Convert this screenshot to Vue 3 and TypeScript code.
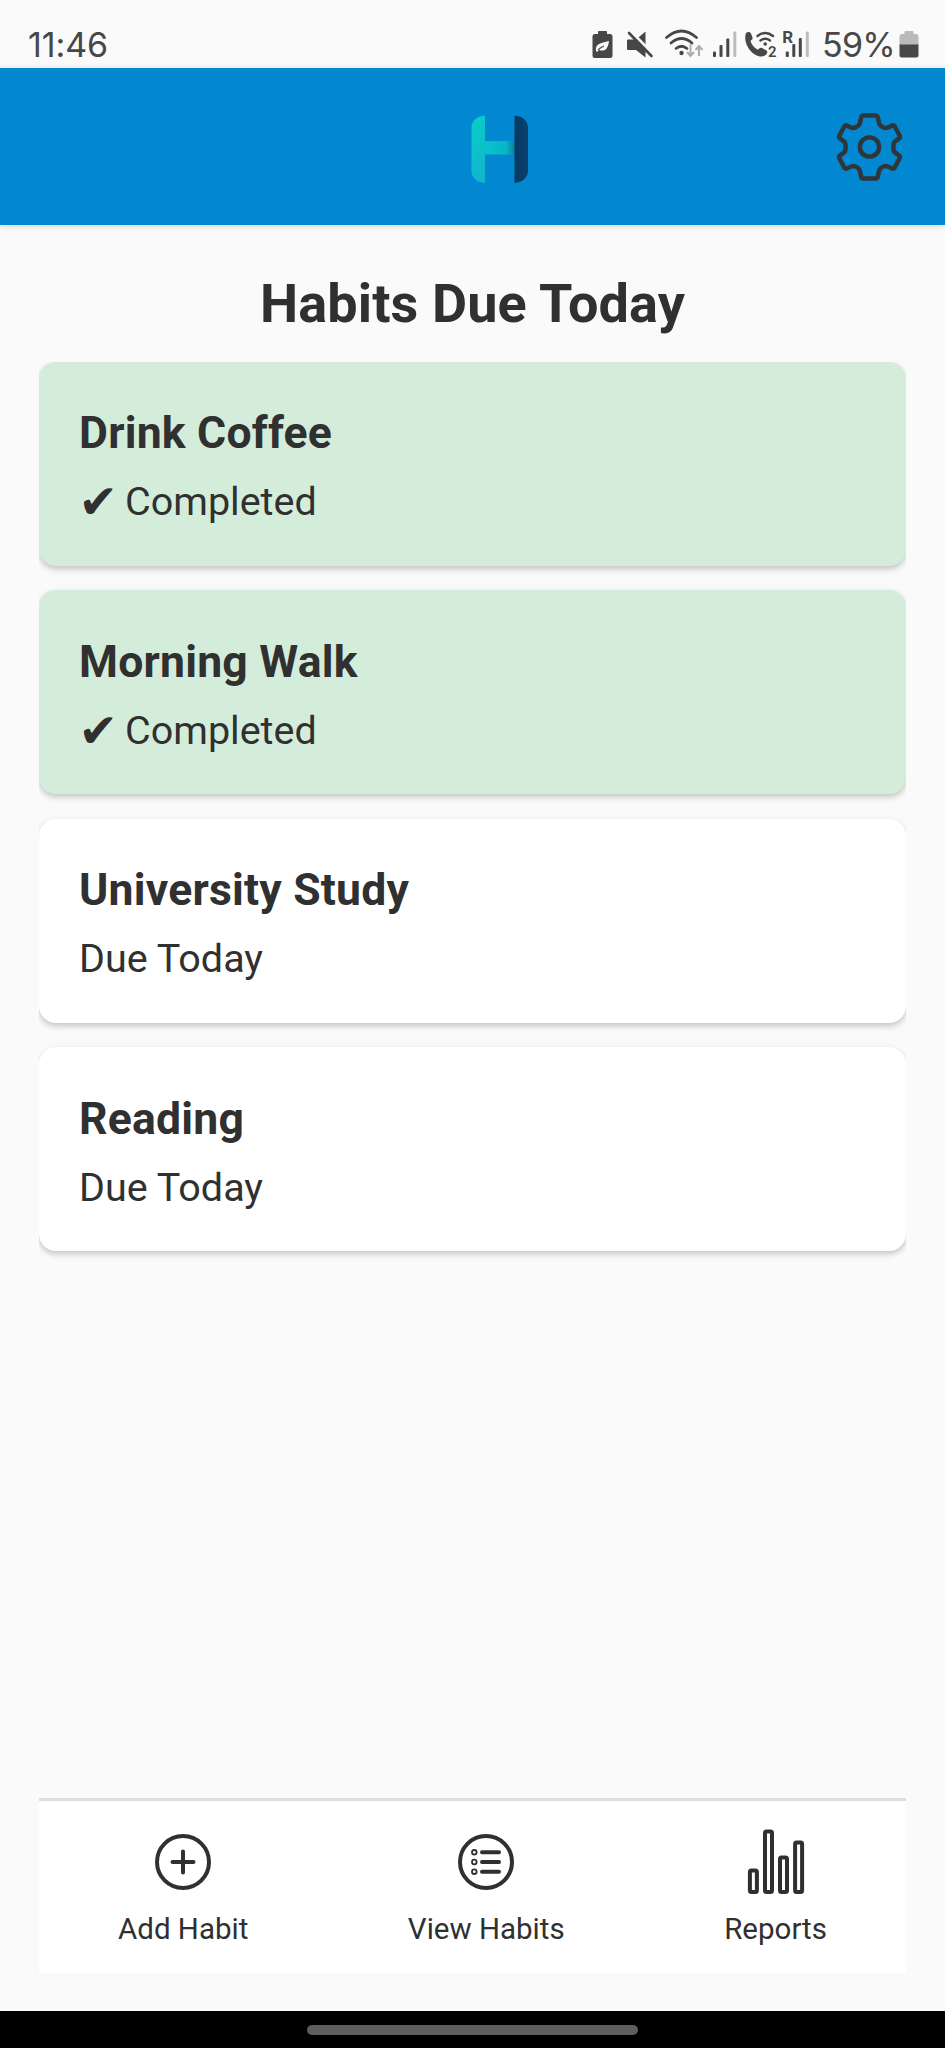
<script setup lang="ts">
interface Habit {
  name: string
  done: boolean
}

const habits: Habit[] = [
  { name: 'Drink Coffee', done: true },
  { name: 'Morning Walk', done: true },
  { name: 'University Study', done: false },
  { name: 'Reading', done: false },
]
</script>

<template>
  <div class="screen">
    <div class="status">
      <span class="time">11:46</span>
      <div class="tray">
        <svg class="saver" width="21" height="30" viewBox="0 0 21 30">
          <path d="M7 2h7q1 0 1 1v2h3q2.500 0 2.500 2.500v19q0 2.500-2.500 2.500h-15q-2.500 0-2.500-2.500v-19q0-2.500 2.500-2.500h3v-2q0-1 1-1z" fill="#474747" />
          <path d="M4 22c-1-7 4-8 13-10c-1 8-4 11-10 9l-2 2z" fill="#fafafa" />
          <path d="M6 21q3-3 6-4" stroke="#474747" stroke-width="1.200" fill="none" />
        </svg>
        <svg class="mute" width="26" height="30" viewBox="0 0 26 30">
          <path d="M1 10.500h8l9.500-8v26l-9.500-7.500h-8q-1 0-1-1v-8.500q0-1 1-1z" fill="#474747" />
          <path d="M3 1.500l23 23.500" stroke="#fafafa" stroke-width="3" />
          <path d="M2 4l22.500 23" stroke="#474747" stroke-width="2.600" stroke-linecap="round" />
        </svg>
        <svg class="wifi" width="39" height="30" viewBox="0 0 39 30">
          <g fill="none" stroke="#474747" stroke-width="2.700" stroke-linecap="round">
            <path d="M1.500 8.500q15-13 30 0" />
            <path d="M6 14q10.500-9 21 0" />
            <path d="M11 19.500q5.500-4.500 11 0" />
          </g>
          <circle cx="16.500" cy="24" r="2.200" fill="#474747" />
          <path d="M25.500 15v12m-3.500-4l3.500 4 3.500-4M34 27v-10m-3.500 4l3.500-4 3.500 4" fill="none" stroke="#adadad" stroke-width="2" />
        </svg>
        <svg class="signal" width="24" height="30" viewBox="0 0 24 30">
          <g fill="#474747"><rect y="22.500" width="3" height="5.500" rx="1" /><rect x="6.500" y="16" width="3" height="12" rx="1" /><rect x="13.300" y="9.500" width="3" height="18.500" rx="1" /></g>
          <rect x="20.300" y="2.500" width="3" height="25.500" rx="1" fill="#bdbdbd" />
        </svg>
        <svg class="call" width="32" height="30" viewBox="0 0 32 30">
          <path d="M1 4c1.500-1.500 4-1.500 5 .500l1.500 4c.5 1.500-.5 2.300-2 3.300c1 4 4 7.500 7.500 9c1.500-2 2.500-2.500 4-1.800l4.500 2.500c2 1.500 0 4.500-2.500 5.500c-10 3-22-12-18-23z" fill="#474747" />
          <g fill="none" stroke="#474747" stroke-width="2.400" stroke-linecap="round"><path d="M12.500 7q8-6 15.500 0" /><path d="M15.500 11.500q4.700-3.500 9.500 0" /></g>
          <circle cx="20.200" cy="15" r="1.800" fill="#474747" />
          <text x="23" y="28" font-size="15" font-weight="600" fill="#474747" stroke="#fafafa" stroke-width="2" paint-order="stroke">2</text>
        </svg>
        <svg class="roam" width="26" height="30" viewBox="0 0 26 30">
          <text x="-.8" y="13.700" font-size="17" font-weight="700" fill="#474747">R</text>
          <g fill="#474747"><rect x="2.800" y="22.500" width="3" height="5.500" rx="1" /><rect x="9.300" y="15" width="3" height="13" rx="1" /><rect x="15.800" y="9" width="3" height="19" rx="1" /></g>
          <rect x="22.800" y="2.500" width="3" height="25.500" rx="1" fill="#bdbdbd" />
        </svg>
        <span class="percent">59%</span>
        <svg class="battery" width="20" height="30" viewBox="0 0 20 30">
          <path d="M6.500 2h7q1 0 1 1v2h2.500q2.500 0 2.500 2.500v8.500h-19v-8.500q0-2.500 2.500-2.500h2.500v-2q0-1 1-1z" fill="#bababa" />
          <path d="M.5 15.500h19v10.500q0 2.500-2.500 2.500h-14q-2.500 0-2.500-2.500z" fill="#474747" />
        </svg>
      </div>
    </div>

    <header class="header">
      <svg class="logo" width="58" height="69" viewBox="0 0 58 69">
        <defs>
          <linearGradient id="teal" x1="0" y1="0" x2=".3" y2="1">
            <stop offset="0" stop-color="#08d0c6" />
            <stop offset="1" stop-color="#12b6cd" />
          </linearGradient>
          <linearGradient id="bar" x1="0" x2="1" y1="0" y2="0">
            <stop offset="0" stop-color="#09c2cd" />
            <stop offset=".7" stop-color="#08b5c6" />
            <stop offset="1" stop-color="#077b99" />
          </linearGradient>
          <linearGradient id="navy" x1="0" x2="1" y1="0" y2="0">
            <stop offset="0" stop-color="#073a60" />
            <stop offset="1" stop-color="#0b4070" />
          </linearGradient>
        </defs>
        <rect x="13.500" y="26" width="31" height="13.500" fill="url(#bar)" />
        <path d="M14 .500v67.500c-8-.5-13.500-5.500-13.500-12v-43.500c0-6.500 5.500-11.500 13.500-12z" fill="url(#teal)" />
        <path d="M43.500 .500v67.500c8-.5 13.500-5.500 13.500-12v-43.500c0-6.500-5.500-11.500-13.500-12z" fill="url(#navy)" />
      </svg>
      <svg class="gear" width="69" height="70" viewBox="72 65 208 210">
        <g fill="none" stroke="#303539" stroke-width="13.500" stroke-linejoin="round">
          <path d="M158 75H194Q200 75 201 81L205 98Q208 109 224 113Q229 113 245 105Q249 104 252 108L267 136Q269 141 265 144L252 154Q248 158 248 170Q248 182 252 186L265 196Q269 199 267 204L252 232Q249 236 245 235Q229 227 224 227Q208 231 205 242L201 259Q200 265 194 265H158Q152 265 151 259L147 242Q144 231 128 227Q123 227 107 235Q103 236 100 232L85 204Q83 199 87 196L100 186Q104 182 104 170Q104 158 100 154L87 144Q83 141 85 136L100 108Q103 104 107 105Q123 113 128 113Q144 109 147 98L151 81Q152 75 158 75Z" />
          <circle cx="176" cy="170" r="29" />
        </g>
      </svg>
    </header>

    <main class="content">
      <h1>Habits Due Today</h1>
      <div class="list">
        <article v-for="h in habits" :key="h.name" class="card" :class="{ done: h.done }">
          <h2>{{ h.name }}</h2>
          <p>
            <template v-if="h.done"><span class="check">✔</span>Completed</template>
            <template v-else>Due Today</template>
          </p>
        </article>
      </div>
      <nav class="tabs">
        <div class="tab add">
          <svg width="60" height="68" viewBox="0 0 60 68" fill="none" stroke="#303030" stroke-width="4" stroke-linecap="round">
            <circle cx="30" cy="34" r="26" />
            <path d="M19.500 34h21M30 23.500v21" />
          </svg>
          <span>Add Habit</span>
        </div>
        <div class="tab view">
          <svg width="60" height="68" viewBox="0 0 60 68" fill="none" stroke="#303030" stroke-width="4" stroke-linecap="round">
            <circle cx="30" cy="34" r="26" />
            <path d="M26 24.300h17M26 34h17M26 43.700h17" />
            <g stroke-width="1.800"><circle cx="18.300" cy="24.300" r="2.300" /><circle cx="18.300" cy="34" r="2.300" /><circle cx="18.300" cy="43.700" r="2.300" /></g>
          </svg>
          <span>View Habits</span>
        </div>
        <div class="tab reports">
          <svg width="60" height="68" viewBox="0 0 60 68" fill="none" stroke="#303030" stroke-width="4">
            <rect x="3.900" y="42.500" width="7" height="21.500" rx="1.500" />
            <rect x="19" y="3.400" width="7" height="60.600" rx="1.500" />
            <rect x="34" y="29.500" width="7" height="34.500" rx="1.500" />
            <rect x="49.100" y="14.500" width="7" height="49.500" rx="1.500" />
          </svg>
          <span>Reports</span>
        </div>
      </nav>
    </main>
    <footer class="gesture"><i></i></footer>
  </div>
</template>

<style>
body {
  margin: 0;
}
</style>

<style scoped>
.screen {
  width: 945px;
  height: 2048px;
  display: flex;
  flex-direction: column;
  background: #fafafa;
  color: #303030;
  font-family: Roboto, "Liberation Sans", sans-serif;
  overflow: hidden;
}
.status {
  flex: none;
  height: 68px;
  box-sizing: border-box;
  padding: 29px 26px 0 28px;
  display: flex;
  justify-content: space-between;
  color: #474747;
}
.time,
.percent {
  font-family: Inter, Roboto, sans-serif;
  font-size: 34px;
  line-height: 32px;
  height: 30px;
}
.time {
  letter-spacing: -0.1px;
}
.tray {
  display: flex;
}
.tray svg {
  flex: none;
  overflow: visible;
}
.mute {
  margin-left: 14px;
}
.wifi {
  margin-left: 12px;
}
.signal {
  margin-left: 9px;
}
.call {
  margin-left: 8px;
}
.roam {
  margin-left: 6px;
}
.percent {
  width: 77px;
  margin-left: 13px;
  letter-spacing: -0.7px;
}
.header {
  flex: none;
  height: 157px;
  background: #0288d1;
  box-shadow: 0 1px 6px rgba(0, 0, 0, 0.16);
  display: grid;
  grid-template-columns: 1fr 69px;
  padding-right: 41px;
}
.logo {
  margin: 47px 0 0 470.5px;
}
.gear {
  margin-top: 44px;
}
.content {
  flex: 1;
  display: flex;
  flex-direction: column;
  padding: 0 39px 38px;
}
h1 {
  margin: 47px 0 0;
  height: 89.5px;
  line-height: 64px;
  font-size: 54px;
  font-weight: 700;
  letter-spacing: 0.12px;
  text-align: center;
}
.list {
  display: flex;
  flex-direction: column;
  gap: 24.5px;
  overflow: hidden;
  padding-bottom: 12px;
}
.card {
  height: 204px;
  box-sizing: border-box;
  padding: 44.5px 40px 0;
  border-radius: 17px;
  background: #fff;
  box-shadow: 0 3px 6px rgba(0, 0, 0, 0.22);
}
.card.done {
  background: #d4edda;
}
h2 {
  margin: 0;
  font-size: 44.5px;
  line-height: 54px;
  font-weight: 700;
  letter-spacing: 0.22px;
}
p {
  margin: 18px 0 0;
  font-size: 39.5px;
  line-height: 48px;
  display: flex;
}
.check {
  width: 46.5px;
  margin-left: -0.5px;
  font-family: "DejaVu Sans", sans-serif;
  font-size: 47px;
}
.tabs {
  margin-top: auto;
  height: 175px;
  box-sizing: border-box;
  border-top: 3px solid #dedede;
  background: #fff;
  display: flex;
  justify-content: space-between;
  padding: 27px 79px 0 79px;
}
.tab {
  display: flex;
  flex-direction: column;
  align-items: center;
  font-size: 29.5px;
  line-height: 36px;
}
.tab svg {
  margin-bottom: 14.5px;
}
.gesture {
  flex: none;
  height: 37px;
  background: #000;
  display: flex;
  justify-content: center;
}
.gesture i {
  margin-top: 14px;
  width: 331px;
  height: 10px;
  border-radius: 5px;
  background: #5e5e5e;
}
</style>
